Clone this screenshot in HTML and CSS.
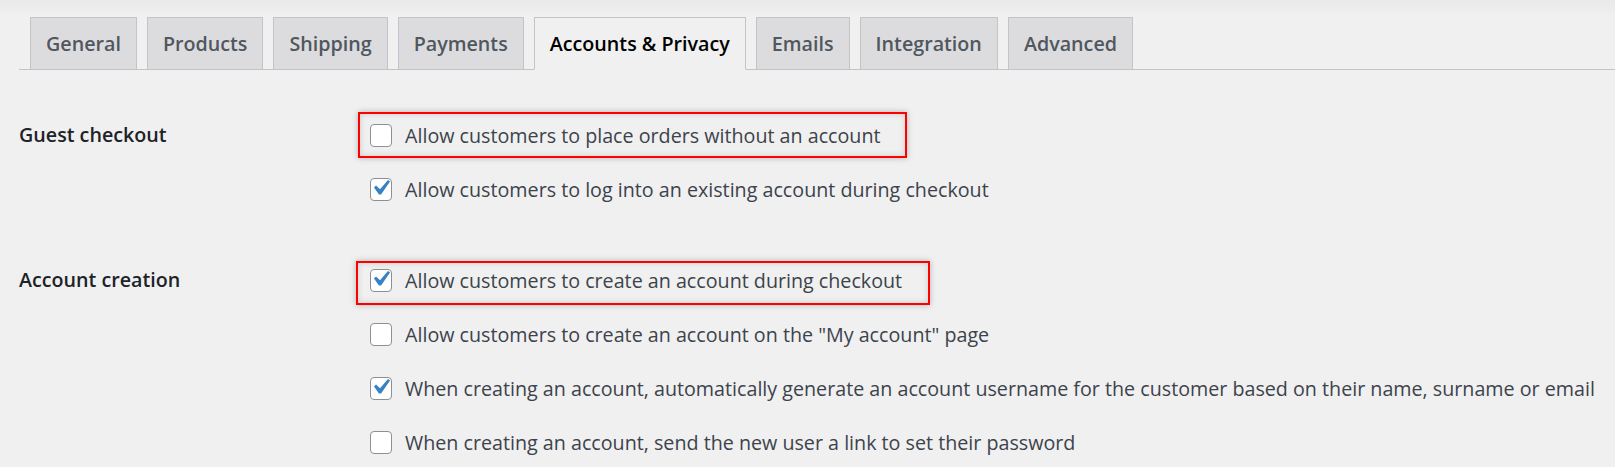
FILE: index.html
```html
<!DOCTYPE html>
<html lang="en">
<head>
  <meta charset="UTF-8">
  <meta name="viewport" content="width=device-width, initial-scale=1.0">
  <title>Accounts &amp; Privacy Settings</title>
  <link rel="stylesheet" href="styles.css">
</head>
<body>
  <div class="wrap">
    <nav class="nav-tabs">
      <a class="nav-tab" href="#">General</a>
      <a class="nav-tab" href="#">Products</a>
      <a class="nav-tab" href="#">Shipping</a>
      <a class="nav-tab" href="#">Payments</a>
      <a class="nav-tab active" href="#">Accounts &amp; Privacy</a>
      <a class="nav-tab" href="#">Emails</a>
      <a class="nav-tab" href="#">Integration</a>
      <a class="nav-tab" href="#">Advanced</a>
    </nav>

    <div class="settings">
      <div class="setting-row">
        <div class="setting-label">Guest checkout</div>
        <div class="setting-options">
          <div class="option">
            <label class="check-label mark-guest">
              <span class="check"></span>
              Allow customers to place orders without an account
            </label>
          </div>
          <div class="option">
            <label class="check-label">
              <span class="check checked"><svg viewBox="0 0 20 20"><path d="M14.83 4.89l1.34.94-5.81 8.38H9.02L5.78 9.67l1.34-1.25 2.57 2.4z"/></svg></span>
              Allow customers to log into an existing account during checkout
            </label>
          </div>
        </div>
      </div>

      <div class="setting-row">
        <div class="setting-label">Account creation</div>
        <div class="setting-options">
          <div class="option">
            <label class="check-label mark-create">
              <span class="check checked"><svg viewBox="0 0 20 20"><path d="M14.83 4.89l1.34.94-5.81 8.38H9.02L5.78 9.67l1.34-1.25 2.57 2.4z"/></svg></span>
              Allow customers to create an account during checkout
            </label>
          </div>
          <div class="option">
            <label class="check-label">
              <span class="check"></span>
              Allow customers to create an account on the "My account" page
            </label>
          </div>
          <div class="option">
            <label class="check-label">
              <span class="check checked"><svg viewBox="0 0 20 20"><path d="M14.83 4.89l1.34.94-5.81 8.38H9.02L5.78 9.67l1.34-1.25 2.57 2.4z"/></svg></span>
              When creating an account, automatically generate an account username for the customer based on their name, surname or email
            </label>
          </div>
          <div class="option">
            <label class="check-label">
              <span class="check"></span>
              When creating an account, send the new user a link to set their password
            </label>
          </div>
        </div>
      </div>
    </div>
  </div>
</body>
</html>
```

FILE: styles.css
```css
html {
  overflow: hidden;
}
body {
  margin: 0;
  font-family: "Segoe UI", "Open Sans", Arial, sans-serif;
  font-size: 19.7px;
  color: #3c434a;
  background: linear-gradient(#e9e9ea, #f0f0f1 16px) #f0f0f1;
}
.wrap {
  padding-left: 19px;
  overflow: hidden;
}
.nav-tabs {
  display: flex;
  align-items: flex-end;
  gap: 10px;
  margin-top: 17px;
  padding-left: 11px;
  border-bottom: 1px solid #c3c4c7;
}
.nav-tab {
  display: block;
  margin-bottom: -1px;
  padding: 12px 15px;
  line-height: 27px;
  font-weight: 600;
  color: #50575e;
  text-decoration: none;
  background: #dcdcde;
  border: 1px solid #c3c4c7;
}
.nav-tab.active {
  color: #000;
  background: #f0f0f1;
  border-bottom-color: #f0f0f1;
}
.settings {
  margin-top: 38px;
}
.setting-row {
  display: grid;
  grid-template-columns: 351px 1fr;
  margin-bottom: 37px;
}
.setting-row:last-child {
  margin-bottom: 0;
}
.setting-label {
  line-height: 54px;
  font-weight: 600;
  color: #1d2327;
}
.option {
  height: 54px;
}
.check-label {
  position: relative;
  display: inline-flex;
  align-items: center;
  height: 100%;
  white-space: nowrap;
}
.check {
  display: inline-flex;
  align-items: center;
  justify-content: center;
  box-sizing: border-box;
  width: 22px;
  height: 23px;
  margin-right: 13px;
  background: #fff;
  border: 1px solid #8c8f94;
  border-radius: 4px;
}
.check svg {
  width: 32px;
  height: 32px;
  margin: -3px -5px 0 -6px;
  fill: #3582c4;
}
.mark-guest::after,
.mark-create::after {
  content: "";
  position: absolute;
  border: 2px solid #f00;
  box-shadow: 0 0 6px rgba(0, 0, 0, 0.25), inset 0 0 6px rgba(0, 0, 0, 0.15);
  pointer-events: none;
}
.mark-guest::after {
  top: 4px;
  bottom: 4px;
  left: -12px;
  right: -26px;
}
.mark-create::after {
  top: 8px;
  bottom: 2px;
  left: -14px;
  right: -28px;
}
```
